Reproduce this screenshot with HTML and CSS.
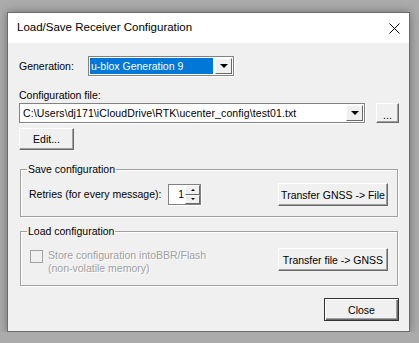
FILE: index.html
```html
<!DOCTYPE html>
<html lang="en">

<head>
  <meta charset="UTF-8">
  <title>Load/Save Receiver Configuration</title>
  <link rel="stylesheet" href="styles.css">
</head>

<body>
  <div class="window">
    <div class="titlebar">
      <span class="title">Load/Save Receiver Configuration</span>
      <svg class="close-x" width="11" height="11" viewBox="0 0 11 11">
        <path d="M0.5 0.5 L10.5 10.5 M10.5 0.5 L0.5 10.5" stroke="#000" stroke-width="1" fill="none"/>
      </svg>
    </div>

    <div class="client">
      <div class="row gen-row">
        <span class="gen-label">Generation:</span>
        <div class="combo gen-combo">
          <div class="combo-field"><span class="selected">u-blox Generation 9</span></div>
          <div class="drop-btn"><span class="arrow"></span></div>
        </div>
      </div>

      <div class="file-label">Configuration file:</div>
      <div class="row file-row">
        <div class="combo file-combo">
          <div class="combo-field"><span class="path">C:\Users\dj171\iCloudDrive\RTK\ucenter_config\test01.txt</span></div>
          <div class="drop-btn"><span class="arrow"></span></div>
        </div>
        <button class="btn browse-btn">...</button>
      </div>

      <button class="btn edit-btn">Edit...</button>

      <fieldset class="group save-group">
        <legend>Save configuration</legend>
        <div class="row group-row">
          <span class="retries-label">Retries (for every message):</span>
          <div class="spinner">
            <div class="spin-field">1</div>
            <div class="spin-btns">
              <div class="spin-btn"><span class="tri-up"></span></div>
              <div class="spin-btn"><span class="tri-down"></span></div>
            </div>
          </div>
          <button class="btn transfer-btn">Transfer GNSS -&gt; File</button>
        </div>
      </fieldset>

      <fieldset class="group load-group">
        <legend>Load configuration</legend>
        <div class="row group-row load-row">
          <span class="checkbox"></span>
          <span class="check-label">Store configuration intoBBR/Flash<br>(non-volatile memory)</span>
          <button class="btn transfer-btn">Transfer file -&gt; GNSS</button>
        </div>
      </fieldset>

      <div class="row footer">
        <button class="btn close-btn">Close</button>
      </div>
    </div>
  </div>
</body>

</html>
```

FILE: styles.css
```css
body {
  margin: 0;
  padding: 0;
  background-color: #ababab;
  font-family: 'Liberation Sans', Arial, sans-serif;
  font-size: 10.5px;
  line-height: 13px;
  color: #000;
}

.window {
  box-sizing: border-box;
  width: 403px;
  height: 320px;
  margin: 12px 0 0 7px;
  border: 1px solid #6b6b6b;
  background-color: #f0f0f0;
  box-shadow: 0 0 9px rgba(0, 0, 0, 0.35);
}

.titlebar {
  height: 30px;
  background-color: #fff;
  display: flex;
  align-items: center;
  padding: 0 9px;
}

.title {
  font-size: 11.5px;
  flex: 1;
  padding-bottom: 1px;
}

.client {
  padding: 13px 9px 0 11px;
}

.row {
  display: flex;
  align-items: center;
}

.gen-label {
  width: 69px;
}

/* combo boxes */
.combo {
  box-sizing: border-box;
  height: 20px;
  display: flex;
  border: 1px solid #828282;
  box-shadow: 1px 1px 0 #fff;
  background-color: #fff;
}

.gen-combo {
  width: 146px;
}

.file-combo {
  width: 346px;
}

.combo-field {
  flex: 1;
  padding: 1px;
  display: flex;
}

.selected {
  flex: 1;
  background-color: #0078d7;
  color: #fff;
  padding-left: 1px;
  line-height: 16px;
}

.path {
  padding-left: 2px;
  line-height: 16px;
  white-space: nowrap;
  letter-spacing: 0.1px;
}

.drop-btn {
  box-sizing: border-box;
  width: 17px;
  margin: 1px;
  background-color: #f0f0f0;
  border: 1px solid;
  border-color: #fff #696969 #696969 #fff;
  display: flex;
  align-items: center;
  justify-content: center;
}

.arrow {
  width: 0;
  height: 0;
  border-left: 4px solid transparent;
  border-right: 4px solid transparent;
  border-top: 4px solid #000;
}

.file-label {
  margin-top: 13px;
}

.file-row {
  margin-top: 1px;
}

/* buttons */
.btn {
  box-sizing: border-box;
  font-family: inherit;
  font-size: 10.5px;
  color: #000;
  background-color: #f0f0f0;
  border: 1px solid;
  border-color: #fff #696969 #696969 #fff;
  box-shadow: inset -1px -1px 0 #a0a0a0;
  padding: 0;
  height: 23px;
}

.browse-btn {
  width: 23px;
  height: 20px;
  margin-left: 11px;
  padding-top: 3px;
}

.edit-btn {
  display: block;
  width: 55px;
  height: 22px;
  margin-top: 5px;
}

/* group boxes */
.group {
  box-sizing: border-box;
  width: 378px;
  margin: 13px 0 0 1px;
  padding: 7px 9px 10px 7px;
  border: 1px solid #a0a0a0;
  box-shadow: inset 1px 1px 0 #fff, 1px 1px 0 #fff;
}

.group legend {
  padding: 0 1px;
  margin-left: -1px;
}

.retries-label {
  margin-left: 1px;
  width: 139px;
}

.spinner {
  box-sizing: border-box;
  width: 33px;
  height: 21px;
  display: flex;
  border: 1px solid #828282;
  box-shadow: 1px 1px 0 #fff;
  background-color: #fff;
}

.spin-field {
  flex: 1;
  text-align: right;
  padding-right: 1px;
  line-height: 19px;
}

.spin-btns {
  width: 15px;
  display: flex;
  flex-direction: column;
}

.spin-btn {
  box-sizing: border-box;
  flex: 1;
  background-color: #f0f0f0;
  border: 1px solid;
  border-color: #fff #696969 #696969 #fff;
  display: flex;
  align-items: center;
  justify-content: center;
}

.tri-up, .tri-down {
  width: 0;
  height: 0;
  border-left: 2px solid transparent;
  border-right: 2px solid transparent;
}

.tri-up {
  border-bottom: 2px solid #000;
}

.tri-down {
  border-top: 2px solid #000;
}

.transfer-btn {
  width: 110px;
  margin-left: auto;
}

.load-group {
  margin-top: 8px;
  padding-top: 10px;
}

.load-row {
  align-items: flex-start;
}

.checkbox {
  box-sizing: border-box;
  width: 13px;
  height: 13px;
  margin: 2px 5px 0 2px;
  border: 1px solid #a0a0a0;
  background-color: #f0f0f0;
}

.check-label {
  margin-top: 1px;
  color: #a0a0a0;
  text-shadow: 1px 1px 0 #fff;
}

.footer {
  justify-content: flex-end;
  margin-top: 12px;
}

.close-btn {
  width: 75px;
  margin-right: 1px;
  border: 1px solid #333;
  box-shadow: inset 1px 1px 0 #fff, inset -1px -1px 0 #696969, inset -2px -2px 0 #a0a0a0;
}
```
